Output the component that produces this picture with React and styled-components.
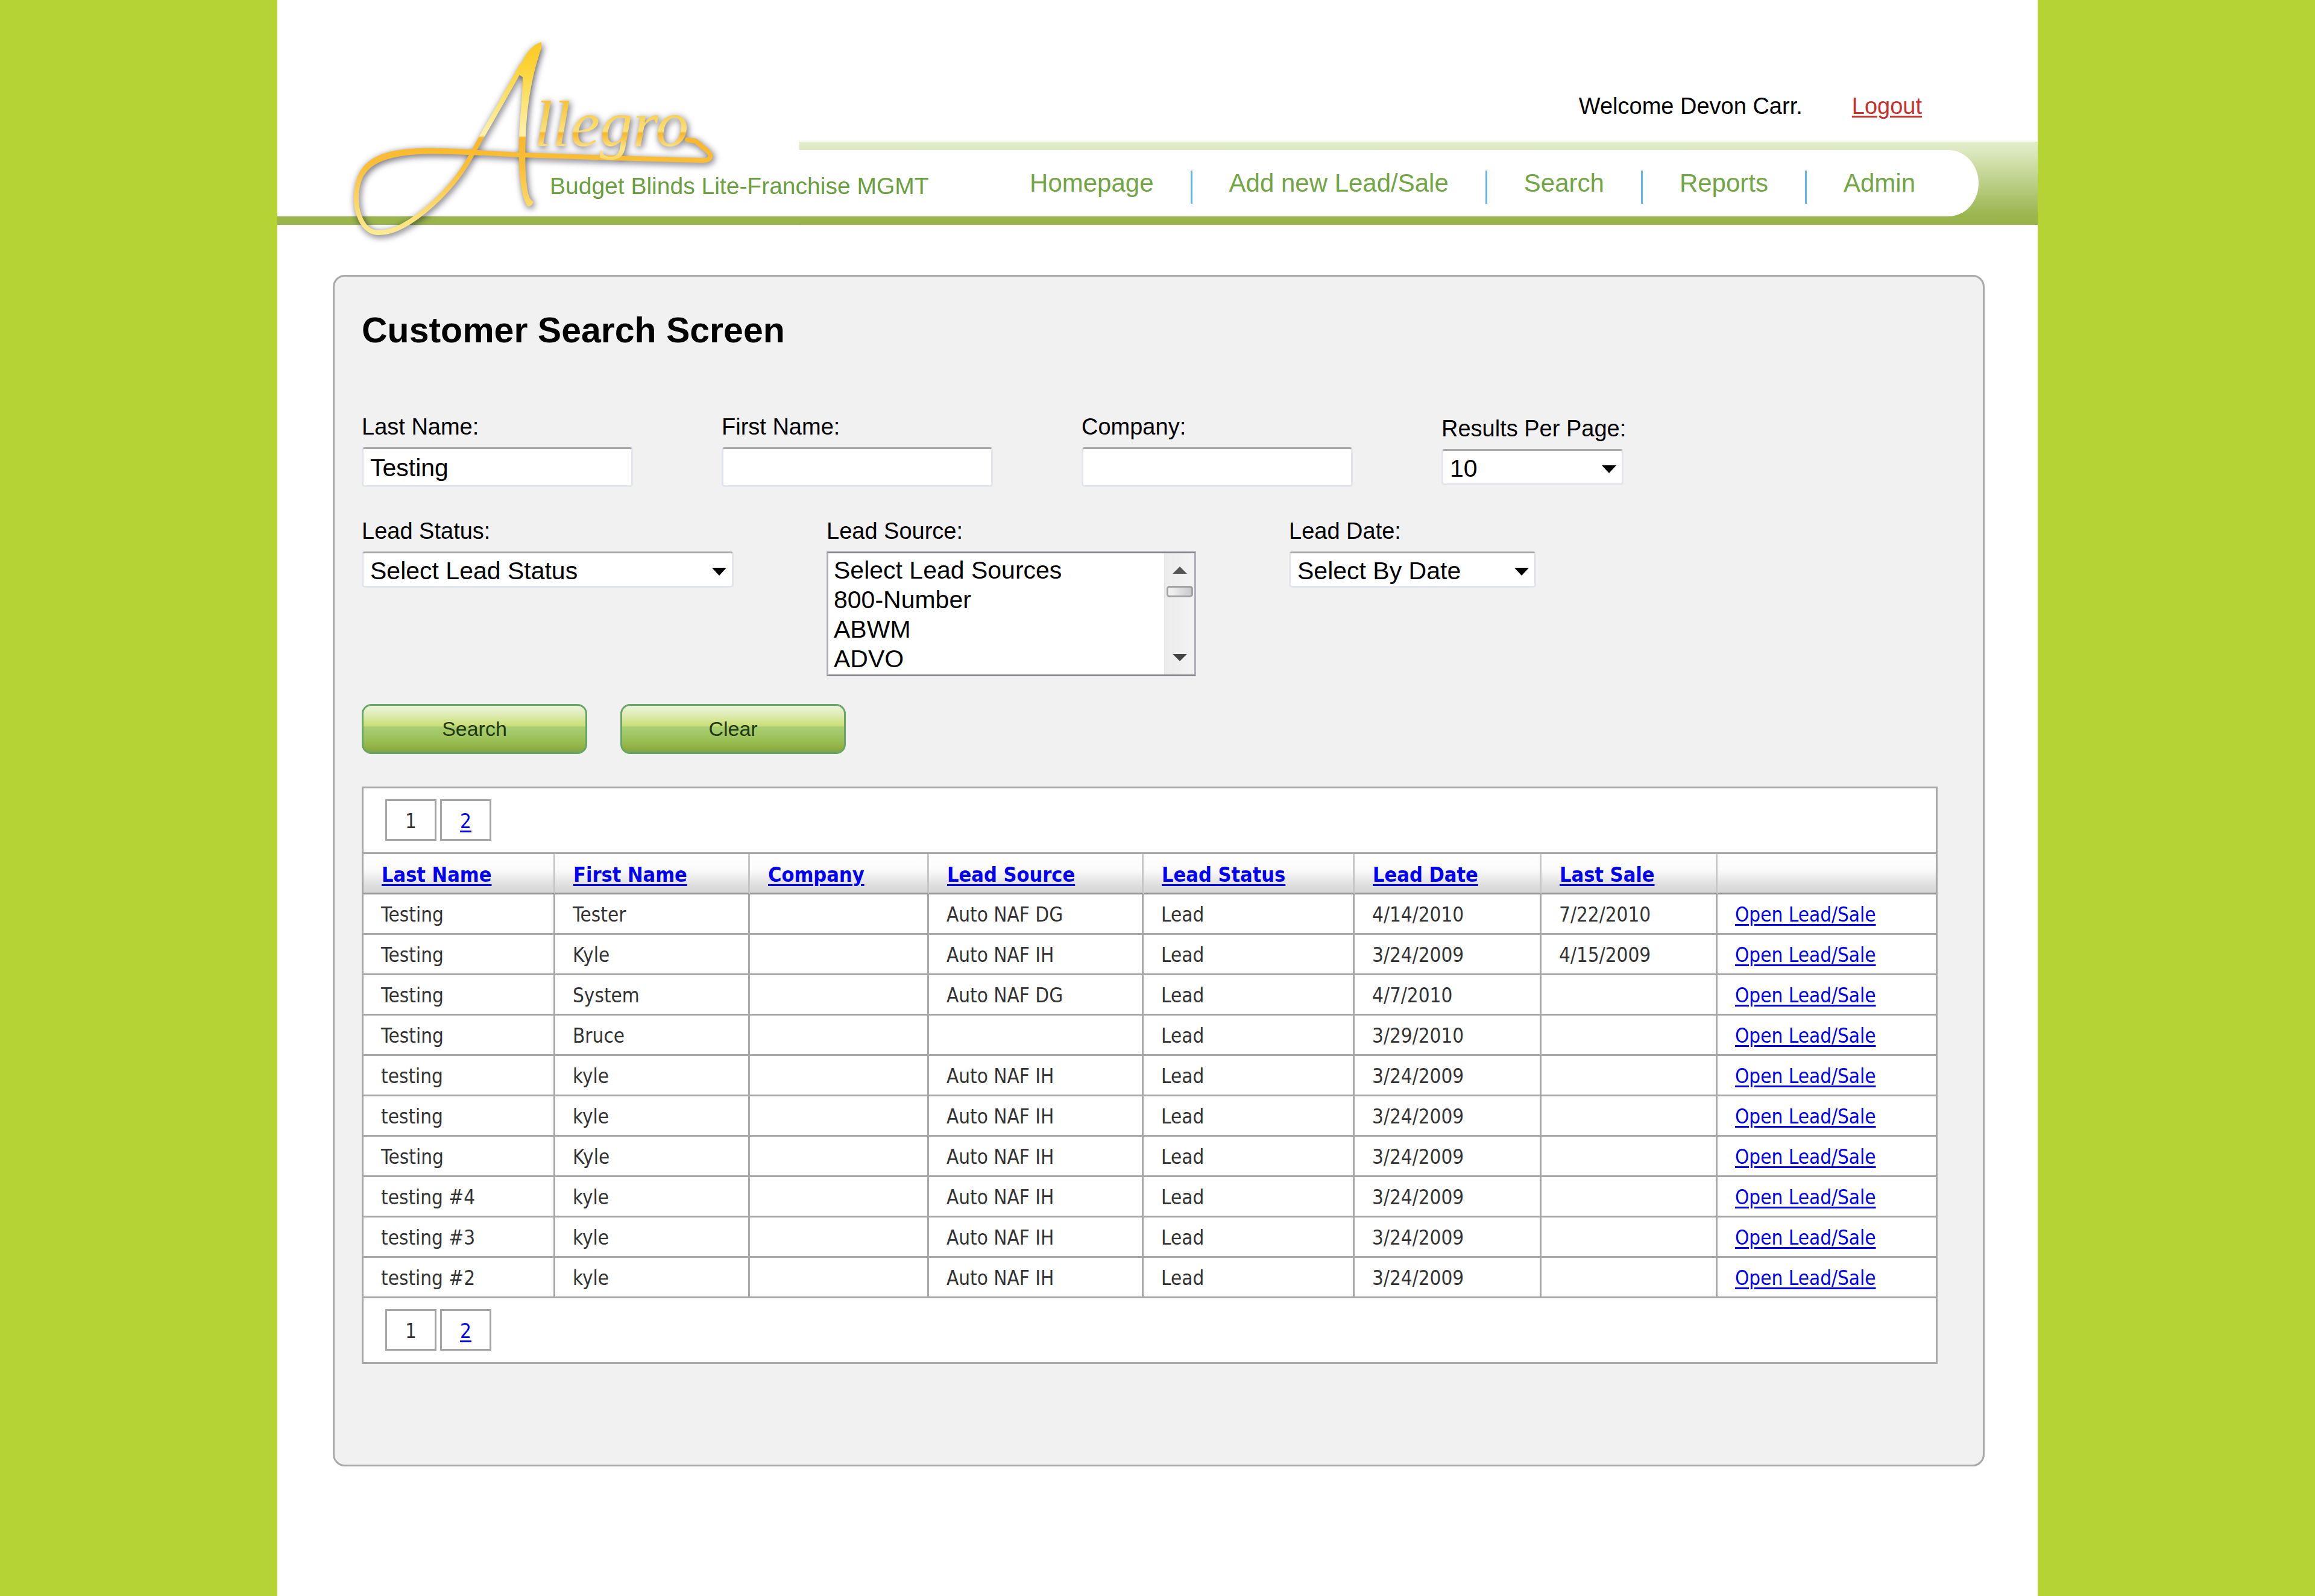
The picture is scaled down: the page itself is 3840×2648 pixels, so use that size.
import React, { useState } from 'react';
import styled, { createGlobalStyle } from 'styled-components';

const GlobalStyle = createGlobalStyle`
  *, *::before, *::after {
    box-sizing: border-box;
  }

  body {
    margin: 0;
    background: #b5d335;
    color: #000;
    font-family: 'Liberation Sans', Arial, sans-serif;
    font-size: 38px;
  }
`;

const Page = styled.div`
  max-width: 2920px;
  min-height: 100vh;
  margin: 0 auto;
  background: #fff;
`;

const Header = styled.header`
  position: relative;
`;

const UserBar = styled.div`
  display: flex;
  justify-content: flex-end;
  gap: 82px;
  height: 235px;
  padding: 155px 192px 0 0;
  font-size: 38px;
  line-height: 42px;
`;

const Logout = styled.a`
  color: #c8302f;
  text-decoration-thickness: 3px;
  text-underline-offset: 3px;
`;

const NavRow = styled.div`
  display: flex;
  height: 138px;
`;

const Brand = styled.div`
  position: relative;
  z-index: 1;
  flex: 0 0 866px;
  min-width: 0;
  padding: 52px 0 0 452px;
  border-bottom: 14px solid #99b54b;
  color: #6a9f3f;
  font-size: 39px;
  line-height: 44px;
  white-space: nowrap;
`;

const Band = styled.div`
  flex: 1;
  min-width: 0;
  padding: 14px 98px 14px 0;
  background: linear-gradient(#e3edcb, #dde9c0 14px, #9ab64f 122px, #97b347);
`;

const Nav = styled.nav`
  display: flex;
  align-items: center;
  justify-content: flex-end;
  height: 110px;
  padding-right: 44px;
  border-radius: 0 50px 50px 0 / 0 55px 55px 0;
  background: #fff;
`;

const NavLink = styled.a`
  padding: 0 61px;
  color: #72a544;
  font-size: 42px;
  text-decoration: none;
`;

const Separator = styled.span`
  width: 3px;
  height: 55px;
  margin-top: 12px;
  background: #62b4ea;
`;

const LogoArt = styled.svg`
  position: absolute;
  top: 40px;
  left: 100px;
  z-index: 2;
  width: 680px;
  height: 380px;
  filter: drop-shadow(2px 3px 6px rgba(30, 30, 50, 0.75));
`;

const Panel = styled.main`
  margin: 83px 88px 0 92px;
  padding: 54px 75px 167px 45px;
  border: 3px solid #a8a8a8;
  border-radius: 20px;
  background: #f1f1f1;
`;

const Title = styled.h1`
  margin: 0 0 103px;
  font-size: 59px;
  line-height: 70px;
`;

const FieldRow = styled.div`
  display: flex;
  align-items: ${(props) => props.$align || 'flex-start'};
  gap: ${(props) => props.$gap}px;
  margin-bottom: ${(props) => props.$space}px;
`;

const Field = styled.div`
  display: flex;
  flex-direction: column;
  gap: 12px;
  width: ${(props) => props.$width}px;
`;

const Label = styled.label`
  line-height: 44px;
  white-space: nowrap;
`;

const TextInput = styled.input`
  width: 100%;
  height: 66px;
  padding: 3px 11px 0;
  border: 3px solid #e3e5ec;
  border-top-color: #a9a9a9;
  border-radius: 5px;
  background: #fff;
  color: #000;
  font: 41px 'Liberation Sans', Arial, sans-serif;
  outline: none;
`;

const SelectBox = styled.div`
  position: relative;
`;

const Dropdown = styled.select`
  display: block;
  width: 100%;
  height: 60px;
  padding: 3px 40px 0 11px;
  border: 3px solid #e3e5ec;
  border-top-color: #a9a9a9;
  border-radius: 5px;
  background: #fff;
  color: #000;
  font: 41px 'Liberation Sans', Arial, sans-serif;
  appearance: none;
`;

const DropArrow = styled.svg`
  position: absolute;
  top: 27px;
  right: 12px;
  width: 24px;
  height: 13px;
  pointer-events: none;
`;

const ListFrame = styled.div`
  display: flex;
  height: 207px;
  border: 3px solid #b0b0bb;
  border-top-color: #86868c;
  border-bottom-color: #86868c;
  background: #fff;
`;

const ListBox = styled.select`
  flex: 1;
  min-width: 0;
  height: 201px;
  padding: 5px 0 0;
  border: 0;
  border-radius: 0;
  background: #fff;
  font: 41px 'Liberation Sans', Arial, sans-serif;
  overflow: hidden;
  scrollbar-width: none;
  outline: none;
`;

const ListOption = styled.option`
  height: 49px;
  min-height: 49px;
  padding: 0 0 0 9px;
  color: #000;
  line-height: 49px;
`;

const ScrollTrack = styled.div`
  display: flex;
  flex-direction: column;
  align-items: center;
  width: 50px;
  padding: 22px 2px;
  border-left: 2px solid #e6e6ea;
  background: linear-gradient(90deg, #ececec, #f3f3f3);
`;

const ScrollArrow = styled.svg`
  width: 24px;
  height: 12px;
`;

const ScrollThumb = styled.div`
  width: 100%;
  height: 19px;
  margin: 20px 0 auto;
  border: 3px solid #a2a2a2;
  border-radius: 5px;
  background: linear-gradient(90deg, #f6f6f6, #c9c9cd);
`;

const Actions = styled.div`
  display: flex;
  gap: 55px;
  margin-bottom: 54px;
`;

const Button = styled.button`
  width: 374px;
  height: 83px;
  padding: 0;
  border: 3px solid #6aa663;
  border-radius: 16px;
  background: linear-gradient(
    #e9f3dc,
    #e0ecb4 18%,
    #c9df78 43%,
    #a9ce72 46%,
    #9bbf56 75%,
    #8eae3f 92%,
    #7ba653
  );
  color: #22380f;
  font: 34px 'Liberation Sans', Arial, sans-serif;
  cursor: pointer;
`;

const Grid = styled.section`
  border: 3px solid #a8a8a8;
  background: #fff;
  color: #333;
  font-family: 'DejaVu Sans Condensed', Tahoma, 'Noto Sans', sans-serif;
  font-size: 33px;
`;

const Pager = styled.div`
  display: flex;
  gap: 6px;
  padding: 18px 36px 19px;
  border-bottom: ${(props) => (props.$top ? '3px solid #a8a8a8' : '0')};
`;

const PageBox = styled.span`
  display: flex;
  align-items: center;
  justify-content: center;
  width: 85px;
  height: 69px;
  padding-top: 3px;
  border: 3px solid #a5a5a5;
`;

const GridLink = styled.a`
  color: #0000f0;
  text-decoration-thickness: 3px;
  text-underline-offset: 4px;
`;

const Table = styled.table`
  width: 100%;
  border-collapse: separate;
  border-spacing: 0;
  table-layout: fixed;
`;

const HeadCell = styled.th`
  height: 67px;
  padding: 3px 0 0 30px;
  border-right: 3px solid #c6c6c6;
  border-bottom: 3px solid #939393;
  background: linear-gradient(#fff, #fbfbfb 40%, #dcdcdc 85%, #d6d6d6);
  font-size: 34px;
  text-align: left;
  white-space: nowrap;

  &:last-child {
    border-right: 0;
  }
`;

const Cell = styled.td`
  height: 67px;
  padding: 3px 0 0 29px;
  border-right: 3px solid #a8a8a8;
  border-bottom: 3px solid #a8a8a8;
  white-space: nowrap;

  &:last-child {
    border-right: 0;
  }
`;

const navItems = ['Homepage', 'Add new Lead/Sale', 'Search', 'Reports', 'Admin'];

const leadSources = ['Select Lead Sources', '800-Number', 'ABWM', 'ADVO'];

const columns = [
  { title: 'Last Name', width: 318 },
  { title: 'First Name', width: 323 },
  { title: 'Company', width: 297 },
  { title: 'Lead Source', width: 356 },
  { title: 'Lead Status', width: 350 },
  { title: 'Lead Date', width: 310 },
  { title: 'Last Sale', width: 292 },
  { title: '', width: 362 },
];

const customers = [
  ['Testing', 'Tester', '', 'Auto NAF DG', 'Lead', '4/14/2010', '7/22/2010'],
  ['Testing', 'Kyle', '', 'Auto NAF IH', 'Lead', '3/24/2009', '4/15/2009'],
  ['Testing', 'System', '', 'Auto NAF DG', 'Lead', '4/7/2010', ''],
  ['Testing', 'Bruce', '', '', 'Lead', '3/29/2010', ''],
  ['testing', 'kyle', '', 'Auto NAF IH', 'Lead', '3/24/2009', ''],
  ['testing', 'kyle', '', 'Auto NAF IH', 'Lead', '3/24/2009', ''],
  ['Testing', 'Kyle', '', 'Auto NAF IH', 'Lead', '3/24/2009', ''],
  ['testing #4', 'kyle', '', 'Auto NAF IH', 'Lead', '3/24/2009', ''],
  ['testing #3', 'kyle', '', 'Auto NAF IH', 'Lead', '3/24/2009', ''],
  ['testing #2', 'kyle', '', 'Auto NAF IH', 'Lead', '3/24/2009', ''],
];

const Logo = () => (
  <LogoArt viewBox="560 40 680 380" role="img" aria-label="Allegro">
    <defs>
      <linearGradient id="gold" gradientUnits="userSpaceOnUse" x1="0" y1="70" x2="0" y2="390">
        <stop offset="0" stopColor="#f9c922" />
        <stop offset="0.15" stopColor="#fcd53c" />
        <stop offset="0.46" stopColor="#fdf0a6" />
        <stop offset="0.485" stopColor="#fdf0a6" />
        <stop offset="0.495" stopColor="#f9b72a" />
        <stop offset="0.65" stopColor="#fabf38" />
        <stop offset="1" stopColor="#fdec93" />
      </linearGradient>
      <linearGradient id="goldText" gradientUnits="userSpaceOnUse" x1="0" y1="160" x2="0" y2="275">
        <stop offset="0" stopColor="#f6bf2a" />
        <stop offset="0.5" stopColor="#fbe07a" />
        <stop offset="0.53" stopColor="#f8b62c" />
        <stop offset="0.75" stopColor="#fde58a" />
        <stop offset="1" stopColor="#fad050" />
      </linearGradient>
    </defs>
    <g fill="none" stroke="url(#gold)" strokeWidth="8" strokeLinecap="round" strokeLinejoin="round">
      <path d="M866 108 C847 143 822 187 799 227 L784 254 C766 288 744 315 716 340 C690 363 655 388 626 386 C600 384 590 350 591 325 C592 297 602 280 620 269 C645 254 690 249 725 250 C760 250 800 254 865 257 L1014 262 L1160 266 C1182 268 1181 257 1174 251 L1154 234 L1140 232" />
    </g>
    <g fill="url(#gold)">
      <path d="M590 305 C596 272 622 251 680 247 C716 244 760 247 800 251 L800 258 C750 256 700 253 665 259 C632 265 612 274 600 297 Z" />
      <path d="M898 70 C882 74 867 95 865 108 L861 124 L867 128 C867 160 862 195 861 228 C860 270 861 305 870 333 L874 341 C877 345 883 341 885 335 C878 330 875 322 873 300 C871 280 871 252 872 228 C874 170 884 120 898 80 Z" />
    </g>
    <text
      x="886"
      y="242"
      fill="url(#goldText)"
      fontFamily="'Liberation Serif', 'Times New Roman', serif"
      fontStyle="italic"
      fontSize="109"
    >
      llegro
    </text>
  </LogoArt>
);

const SelectField = ({ id, label, width, option }) => (
  <Field $width={width}>
    <Label htmlFor={id}>{label}</Label>
    <SelectBox>
      <Dropdown id={id}>
        <option>{option}</option>
      </Dropdown>
      <DropArrow viewBox="0 0 24 13" aria-hidden="true">
        <path d="M0 0h24L12 13z" />
      </DropArrow>
    </SelectBox>
  </Field>
);

const TextField = ({ id, label, initial = '' }) => {
  const [value, setValue] = useState(initial);

  return (
    <Field $width={450}>
      <Label htmlFor={id}>{label}</Label>
      <TextInput id={id} type="text" value={value} onChange={(e) => setValue(e.target.value)} />
    </Field>
  );
};

const PageLinks = ({ top }) => (
  <Pager $top={top}>
    <PageBox>1</PageBox>
    <PageBox>
      <GridLink href="#page-2">2</GridLink>
    </PageBox>
  </Pager>
);

const App = () => {
  return (
    <>
      <GlobalStyle />
      <Page>
        <Header>
          <Logo />
          <UserBar>
            <span>Welcome Devon Carr.</span>
            <Logout href="#logout">Logout</Logout>
          </UserBar>
          <NavRow>
            <Brand>Budget Blinds Lite-Franchise MGMT</Brand>
            <Band>
              <Nav>
                {navItems.map((item, index) => (
                  <React.Fragment key={item}>
                    {index > 0 && <Separator />}
                    <NavLink href="#nav">{item}</NavLink>
                  </React.Fragment>
                ))}
              </Nav>
            </Band>
          </NavRow>
        </Header>

        <Panel>
          <Title>Customer Search Screen</Title>
          <form onSubmit={(e) => e.preventDefault()}>
            <FieldRow $gap={147} $space={51} $align="center">
              <TextField id="last-name" label="Last Name:" initial="Testing" />
              <TextField id="first-name" label="First Name:" />
              <TextField id="company" label="Company:" />
              <SelectField id="per-page" label="Results Per Page:" width={302} option="10" />
            </FieldRow>
            <FieldRow $gap={154} $space={46}>
              <SelectField id="lead-status" label="Lead Status:" width={617} option="Select Lead Status" />
              <Field $width={613}>
                <Label htmlFor="lead-source">Lead Source:</Label>
                <ListFrame>
                  <ListBox id="lead-source" multiple size={4}>
                    {leadSources.map((source) => (
                      <ListOption key={source}>{source}</ListOption>
                    ))}
                  </ListBox>
                  <ScrollTrack aria-hidden="true">
                    <ScrollArrow viewBox="0 0 24 12">
                      <path d="M0 12h24L12 0z" fill="#555" />
                    </ScrollArrow>
                    <ScrollThumb />
                    <ScrollArrow viewBox="0 0 24 12">
                      <path d="M0 0h24L12 12z" fill="#444" />
                    </ScrollArrow>
                  </ScrollTrack>
                </ListFrame>
              </Field>
              <SelectField id="lead-date" label="Lead Date:" width={410} option="Select By Date" />
            </FieldRow>
            <Actions>
              <Button type="submit">Search</Button>
              <Button type="reset">Clear</Button>
            </Actions>
          </form>

          <Grid>
            <PageLinks top />
            <Table>
              <colgroup>
                {columns.map((column) => (
                  <col key={column.title} width={column.width} />
                ))}
              </colgroup>
              <thead>
                <tr>
                  {columns.map((column) => (
                    <HeadCell key={column.title}>
                      {column.title && <GridLink href="#sort">{column.title}</GridLink>}
                    </HeadCell>
                  ))}
                </tr>
              </thead>
              <tbody>
                {customers.map((customer, row) => (
                  <tr key={row}>
                    {customer.map((value, index) => (
                      <Cell key={index}>{value}</Cell>
                    ))}
                    <Cell>
                      <GridLink href="#open">Open Lead/Sale</GridLink>
                    </Cell>
                  </tr>
                ))}
              </tbody>
            </Table>
            <PageLinks />
          </Grid>
        </Panel>
      </Page>
    </>
  );
};

export default App;
